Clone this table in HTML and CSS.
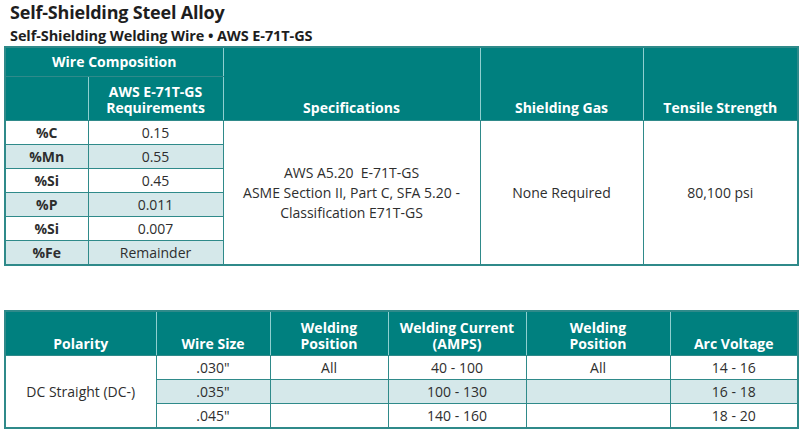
FILE: index.html
```html
<!DOCTYPE html>
<html>
<head>
<meta charset="utf-8">
<link rel="stylesheet" href="styles.css">
</head>
<body>
<div class="page">
  <h1 class="title">Self-Shielding Steel Alloy</h1>
  <h2 class="subtitle">Self-Shielding Welding Wire • AWS E-71T-GS</h2>

  <table class="grid grid-comp">
    <colgroup>
      <col style="width:83px"><col style="width:135px"><col style="width:257px"><col style="width:163px"><col style="width:155px">
    </colgroup>
    <thead>
      <tr class="h1">
        <th colspan="2" class="top">Wire Composition</th>
        <th rowspan="2">Specifications</th>
        <th rowspan="2">Shielding Gas</th>
        <th rowspan="2">Tensile Strength</th>
      </tr>
      <tr class="h2">
        <th class="split"></th>
        <th class="split">AWS E-71T-GS<br>Requirements</th>
      </tr>
    </thead>
    <tbody>
      <tr><td class="el">%C</td><td>0.15</td>
        <td rowspan="6" class="big">AWS A5.20&nbsp; E-71T-GS<br>ASME Section II, Part C, SFA 5.20 -<br>Classification E71T-GS</td>
        <td rowspan="6" class="big">None Required</td>
        <td rowspan="6" class="big">80,100 psi</td></tr>
      <tr class="alt"><td class="el">%Mn</td><td>0.55</td></tr>
      <tr><td class="el">%Si</td><td>0.45</td></tr>
      <tr class="alt"><td class="el">%P</td><td>0.011</td></tr>
      <tr><td class="el">%Si</td><td>0.007</td></tr>
      <tr class="alt"><td class="el">%Fe</td><td>Remainder</td></tr>
    </tbody>
  </table>

  <table class="grid grid-param">
    <colgroup>
      <col style="width:151px"><col style="width:114px"><col style="width:118px"><col style="width:138px"><col style="width:144px"><col style="width:128px">
    </colgroup>
    <thead>
      <tr class="h3">
        <th>Polarity</th>
        <th>Wire Size</th>
        <th>Welding<br>Position</th>
        <th>Welding Current<br>(AMPS)</th>
        <th>Welding<br>Position</th>
        <th>Arc Voltage</th>
      </tr>
    </thead>
    <tbody>
      <tr><td rowspan="3" class="big">DC Straight (DC-)</td><td>.030"</td><td>All</td><td>40 - 100</td><td>All</td><td>14 - 16</td></tr>
      <tr class="alt"><td>.035"</td><td></td><td>100 - 130</td><td></td><td>16 - 18</td></tr>
      <tr><td>.045"</td><td></td><td>140 - 160</td><td></td><td>18 - 20</td></tr>
    </tbody>
  </table>
</div>
</body>
</html>
```

FILE: styles.css
```css
html, body {
  margin: 0;
  padding: 0;
  background: #ffffff;
}
body {
  font-family: "Open Sans", "Liberation Sans", sans-serif;
  color: #2e2e2e;
}
.page {
  padding: 0 3px 0 4px;
}
.title {
  margin: 0 0 0 6px;
  font-size: 18px;
  line-height: 25px;
  font-weight: 700;
  color: #1e1e1e;
  letter-spacing: -0.2px;
}
.subtitle {
  margin: 0 0 0 6px;
  font-size: 14.5px;
  line-height: 21px;
  font-weight: 700;
  color: #1e1e1e;
  letter-spacing: -0.1px;
}
.grid {
  border-collapse: collapse;
  table-layout: fixed;
  width: 793px;
  border: 2px solid #2f8a8a;
}
.grid th {
  background: #00807f;
  color: #ffffff;
  font-weight: 700;
  font-size: 14px;
  line-height: 16px;
  text-align: center;
  vertical-align: bottom;
  padding: 0 2px 4px;
  border-left: 1px solid #8fcfcf;
  border-right: 1px solid #8fcfcf;
  border-top: none;
  border-bottom: 1px solid #2f8a8a;
}
.grid td {
  font-size: 14px;
  line-height: 16px;
  text-align: center;
  vertical-align: middle;
  padding: 0 4px;
  border: 1px solid #2f8a8a;
  height: 23px;
  background: #ffffff;
}
.grid tr.alt td {
  background: #d5e8ea;
}
.grid tr.alt td.big, .grid td.big {
  background: #ffffff;
}
.grid td.el {
  font-weight: 700;
  font-size: 14px;
}
.grid-comp .h1 th {
  height: 28px;
}
.grid-comp .h1 th.top {
  vertical-align: middle;
  padding: 0;
}
.grid-comp .h2 th {
  height: 39px;
}
.grid-comp td.big {
  line-height: 20px;
}
.grid-param {
  margin-top: 44px;
}
.grid-param .h3 th {
  height: 40px;
  padding-bottom: 3px;
}
.grid-param td {
  height: 23px;
}
```
